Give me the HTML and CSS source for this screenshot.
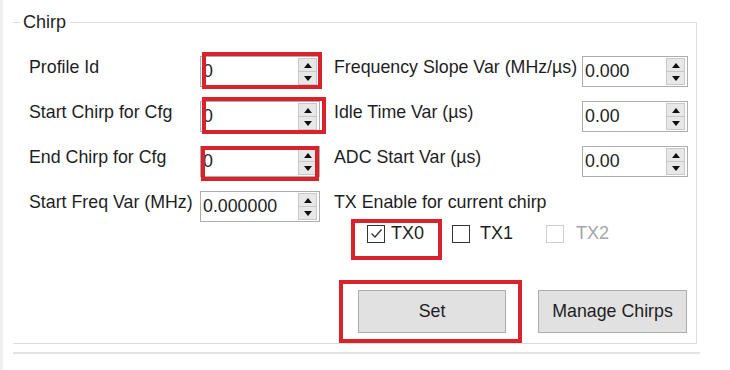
FILE: index.html
```html
<!DOCTYPE html>
<html lang="en">
<head>
    <meta charset="UTF-8">
    <title>Chirp</title>
    <link rel="stylesheet" href="styles.css">
</head>
<body>
    <div class="window">
        <fieldset class="group">
            <legend>Chirp</legend>
            <div class="group-body">
                <div class="col-left">
                    <div class="row">
                        <span class="label">Profile Id</span>
                        <div class="spin wide"><span class="val">0</span><span class="btns"><i class="up"></i><i class="down"></i></span></div>
                    </div>
                    <div class="row">
                        <span class="label">Start Chirp for Cfg</span>
                        <div class="spin wide"><span class="val">0</span><span class="btns"><i class="up"></i><i class="down"></i></span></div>
                    </div>
                    <div class="row">
                        <span class="label">End Chirp for Cfg</span>
                        <div class="spin wide"><span class="val">0</span><span class="btns"><i class="up"></i><i class="down"></i></span></div>
                    </div>
                    <div class="row">
                        <span class="label">Start Freq Var (MHz)</span>
                        <div class="spin wide"><span class="val">0.000000</span><span class="btns"><i class="up"></i><i class="down"></i></span></div>
                    </div>
                </div>

                <div class="col-right">
                    <div class="row">
                        <span class="label">Frequency Slope Var (MHz/µs)</span>
                        <div class="spin"><span class="val">0.000</span><span class="btns"><i class="up"></i><i class="down"></i></span></div>
                    </div>
                    <div class="row">
                        <span class="label">Idle Time Var (µs)</span>
                        <div class="spin"><span class="val">0.00</span><span class="btns"><i class="up"></i><i class="down"></i></span></div>
                    </div>
                    <div class="row">
                        <span class="label">ADC Start Var (µs)</span>
                        <div class="spin"><span class="val">0.00</span><span class="btns"><i class="up"></i><i class="down"></i></span></div>
                    </div>
                    <div class="row caption">
                        <span class="label">TX Enable for current chirp</span>
                    </div>

                    <div class="checks">
                        <label class="check tx0">
                            <span class="box">
                                <svg width="15" height="15" viewBox="0 0 15 15"><polyline points="2.5,7.5 6,11 12.5,3.5" fill="none" stroke="#333" stroke-width="1.3"/></svg>
                            </span>
                            TX0
                        </label>
                        <label class="check tx1"><span class="box"></span>TX1</label>
                        <label class="check disabled"><span class="box"></span>TX2</label>
                    </div>

                    <div class="buttons">
                        <button class="btn set">Set</button>
                        <button class="btn manage">Manage Chirps</button>
                    </div>
                </div>
            </div>
        </fieldset>
        <div class="next-group"></div>

        <!-- annotation boxes drawn over the dialog -->
        <div class="mark" style="left: 199px; top: 52px; width: 120px; height: 37px;"></div>
        <div class="mark" style="left: 199px; top: 97px; width: 124px; height: 37px;"></div>
        <div class="mark" style="left: 198px; top: 146px; width: 118px; height: 35px;"></div>
        <div class="mark" style="left: 348px; top: 219px; width: 91px; height: 41px;"></div>
        <div class="mark" style="left: 336px; top: 280px; width: 183px; height: 63px;"></div>
    </div>
</body>
</html>
```

FILE: styles.css
```css
body {
    margin: 0;
    font-family: 'Liberation Sans', Arial, sans-serif;
    font-size: 17.8px;
    color: #1e1e1e;
    background-color: #fff;
}
.window {
    position: relative;
    height: 370px;
    border-left: 3px solid #f0f0f0;
    padding: 12px 0 0 10px;
    box-sizing: border-box;
    overflow: hidden;
}
.group {
    width: 684px;
    margin: 0;
    padding: 0;
    box-sizing: border-box;
    border: 1px solid #dcdcdc;
    border-left: none;
}
.group legend {
    margin-left: 7px;
    padding: 0 4px 0 3px;
    font-size: 18px;
    line-height: 20px;
}
.group-body {
    display: flex;
    padding: 24px 8px 10px 16px;
}
.col-left {
    width: 291px;
}
.col-right {
    width: 354px;
    margin-left: 14px;
}
.row {
    display: flex;
    justify-content: space-between;
    align-items: flex-start;
    height: 31px;
    margin-bottom: 14px;
}
.row:last-child,
.row.caption {
    margin-bottom: 0;
}
.label {
    white-space: nowrap;
    padding-top: 1px;
    line-height: 20px;
}
.spin {
    display: flex;
    align-items: center;
    width: 106px;
    height: 31px;
    padding-left: 2px;
    box-sizing: border-box;
    border: 1px solid #adadad;
    background-color: #fff;
}
.spin.wide {
    width: 120px;
}
.spin .val {
    color: #222;
}
.btns {
    display: flex;
    flex-direction: column;
    width: 19px;
    height: 27px;
    margin-left: auto;
    margin-right: 2px;
    box-sizing: border-box;
    border: 1px solid #c8c8c8;
    background-color: #e8e8e8;
}
.btns i {
    flex: 1;
    display: flex;
    align-items: center;
    justify-content: center;
}
.btns i + i {
    border-top: 1px solid #c8c8c8;
}
.btns .up::before,
.btns .down::before {
    content: "";
    border-left: 4px solid transparent;
    border-right: 4px solid transparent;
}
.btns .up::before {
    border-bottom: 5px solid #111;
}
.btns .down::before {
    border-top: 5px solid #111;
}
.checks {
    display: flex;
    align-items: center;
    height: 23px;
    padding-left: 33px;
    font-size: 18px;
}
.check {
    display: flex;
    align-items: center;
    gap: 6px;
}
.check.tx0 {
    width: 85px;
}
.check.tx1 {
    width: 94px;
    gap: 10px;
}
.check.disabled {
    gap: 12px;
    color: #a6a6a6;
}
.box {
    display: flex;
    width: 18px;
    height: 18px;
    box-sizing: border-box;
    border: 1px solid #333;
    background-color: #fff;
    align-items: center;
    justify-content: center;
}
.check.disabled .box {
    border-color: #cfcfcf;
}
.buttons {
    display: flex;
    gap: 32px;
    margin-top: 45px;
    padding-left: 24px;
}
.btn {
    height: 43px;
    font-family: inherit;
    font-size: 17.8px;
    color: #1e1e1e;
    background-color: #e1e1e1;
    border: 1px solid #adadad;
    padding: 0;
}
.btn.set {
    width: 148px;
}
.btn.manage {
    width: 149px;
}
.next-group {
    width: 687px;
    margin-top: 8px;
    border-top: 2px solid #e4e4e4;
}
.mark {
    position: absolute;
    box-sizing: border-box;
    border: 4px solid #d9222b;
}
```
